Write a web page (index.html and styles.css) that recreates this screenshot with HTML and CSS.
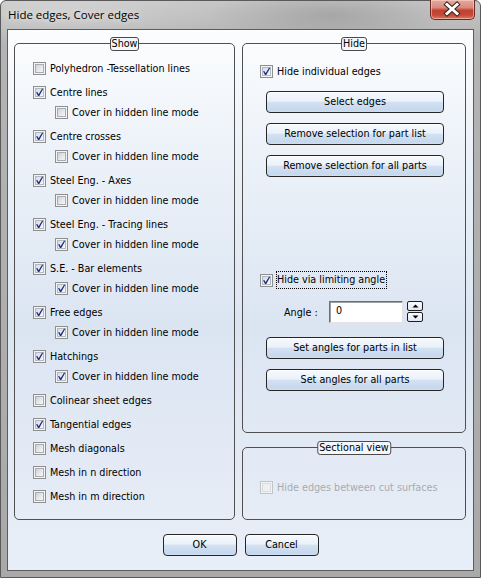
FILE: index.html
```html
<!DOCTYPE html>
<html>
<head>
<meta charset="utf-8">
<link rel="stylesheet" href="styles.css">
</head>
<body>
<div class="window">
  <div class="titlebar">
    <span class="title">Hide edges, Cover edges</span>
    <div class="close">
      <svg width="45" height="20" viewBox="0 0 45 20">
        <path d="M17 5.5 L27 14.5 M27 5.5 L17 14.5" stroke="#3a2420" stroke-width="5" stroke-linecap="square"/>
        <path d="M17 5.5 L27 14.5 M27 5.5 L17 14.5" stroke="#ffffff" stroke-width="3" stroke-linecap="square"/>
      </svg>
    </div>
  </div>
  <div class="client">
    <div class="cols">
      <section class="group show-group">
        <span class="group-label">Show</span>
        <div class="row"><span class="cb"></span><span>Polyhedron -Tessellation lines</span></div>
        <div class="row main"><span class="cb on"><svg viewBox="0 0 13 13"><path d="M3 6.2 L4.6 6.2 L5.6 8.2 L9 2.8 L10.3 2.8 L6.3 10 L5 10 Z" fill="#1d2f86"/></svg></span><span>Centre lines</span></div>
        <div class="row sub"><span class="cb"></span><span>Cover in hidden line mode</span></div>
        <div class="row main"><span class="cb on"><svg viewBox="0 0 13 13"><path d="M3 6.2 L4.6 6.2 L5.6 8.2 L9 2.8 L10.3 2.8 L6.3 10 L5 10 Z" fill="#1d2f86"/></svg></span><span>Centre crosses</span></div>
        <div class="row sub"><span class="cb"></span><span>Cover in hidden line mode</span></div>
        <div class="row main"><span class="cb on"><svg viewBox="0 0 13 13"><path d="M3 6.2 L4.6 6.2 L5.6 8.2 L9 2.8 L10.3 2.8 L6.3 10 L5 10 Z" fill="#1d2f86"/></svg></span><span>Steel Eng. - Axes</span></div>
        <div class="row sub"><span class="cb"></span><span>Cover in hidden line mode</span></div>
        <div class="row main"><span class="cb on"><svg viewBox="0 0 13 13"><path d="M3 6.2 L4.6 6.2 L5.6 8.2 L9 2.8 L10.3 2.8 L6.3 10 L5 10 Z" fill="#1d2f86"/></svg></span><span>Steel Eng. - Tracing lines</span></div>
        <div class="row sub"><span class="cb on"><svg viewBox="0 0 13 13"><path d="M3 6.2 L4.6 6.2 L5.6 8.2 L9 2.8 L10.3 2.8 L6.3 10 L5 10 Z" fill="#1d2f86"/></svg></span><span>Cover in hidden line mode</span></div>
        <div class="row main"><span class="cb on"><svg viewBox="0 0 13 13"><path d="M3 6.2 L4.6 6.2 L5.6 8.2 L9 2.8 L10.3 2.8 L6.3 10 L5 10 Z" fill="#1d2f86"/></svg></span><span>S.E. - Bar elements</span></div>
        <div class="row sub"><span class="cb on"><svg viewBox="0 0 13 13"><path d="M3 6.2 L4.6 6.2 L5.6 8.2 L9 2.8 L10.3 2.8 L6.3 10 L5 10 Z" fill="#1d2f86"/></svg></span><span>Cover in hidden line mode</span></div>
        <div class="row main"><span class="cb on"><svg viewBox="0 0 13 13"><path d="M3 6.2 L4.6 6.2 L5.6 8.2 L9 2.8 L10.3 2.8 L6.3 10 L5 10 Z" fill="#1d2f86"/></svg></span><span>Free edges</span></div>
        <div class="row sub"><span class="cb on"><svg viewBox="0 0 13 13"><path d="M3 6.2 L4.6 6.2 L5.6 8.2 L9 2.8 L10.3 2.8 L6.3 10 L5 10 Z" fill="#1d2f86"/></svg></span><span>Cover in hidden line mode</span></div>
        <div class="row main"><span class="cb on"><svg viewBox="0 0 13 13"><path d="M3 6.2 L4.6 6.2 L5.6 8.2 L9 2.8 L10.3 2.8 L6.3 10 L5 10 Z" fill="#1d2f86"/></svg></span><span>Hatchings</span></div>
        <div class="row sub"><span class="cb on"><svg viewBox="0 0 13 13"><path d="M3 6.2 L4.6 6.2 L5.6 8.2 L9 2.8 L10.3 2.8 L6.3 10 L5 10 Z" fill="#1d2f86"/></svg></span><span>Cover in hidden line mode</span></div>
        <div class="row main"><span class="cb"></span><span>Colinear sheet edges</span></div>
        <div class="row main"><span class="cb on"><svg viewBox="0 0 13 13"><path d="M3 6.2 L4.6 6.2 L5.6 8.2 L9 2.8 L10.3 2.8 L6.3 10 L5 10 Z" fill="#1d2f86"/></svg></span><span>Tangential edges</span></div>
        <div class="row main"><span class="cb"></span><span>Mesh diagonals</span></div>
        <div class="row main"><span class="cb"></span><span>Mesh in n direction</span></div>
        <div class="row main"><span class="cb"></span><span>Mesh in m direction</span></div>
      </section>
      <div class="right">
        <section class="group hide-group">
          <span class="group-label">Hide</span>
          <div class="row"><span class="cb on"><svg viewBox="0 0 13 13"><path d="M3 6.2 L4.6 6.2 L5.6 8.2 L9 2.8 L10.3 2.8 L6.3 10 L5 10 Z" fill="#1d2f86"/></svg></span><span>Hide individual edges</span></div>
          <button class="btn wide first">Select edges</button>
          <button class="btn wide">Remove selection for part list</button>
          <button class="btn wide">Remove selection for all parts</button>
          <div class="row angle-check"><span class="cb on"><svg viewBox="0 0 13 13"><path d="M3 6.2 L4.6 6.2 L5.6 8.2 L9 2.8 L10.3 2.8 L6.3 10 L5 10 Z" fill="#1d2f86"/></svg></span><span class="focus">Hide via limiting angle</span></div>
          <div class="angle-row">
            <span class="angle-label">Angle :</span>
            <span class="input">0</span>
            <span class="spinner">
              <span class="spin"><svg width="7" height="4" viewBox="0 0 7 4"><path d="M0.5 3.5 L3.5 0.5 L6.5 3.5 Z" fill="#000"/></svg></span>
              <span class="spin"><svg width="7" height="4" viewBox="0 0 7 4"><path d="M0.5 0.5 L3.5 3.5 L6.5 0.5 Z" fill="#000"/></svg></span>
            </span>
          </div>
          <button class="btn wide set-first">Set angles for parts in list</button>
          <button class="btn wide">Set angles for all parts</button>
        </section>
        <section class="group sect-group">
          <span class="group-label">Sectional view</span>
          <div class="row disabled"><span class="cb off"></span><span>Hide edges between cut surfaces</span></div>
        </section>
      </div>
    </div>
    <div class="footer">
      <button class="btn small">OK</button>
      <button class="btn small">Cancel</button>
    </div>
  </div>
</div>
</body>
</html>
```

FILE: styles.css
```css
html, body {
  margin: 0;
  padding: 0;
  background: #ffffff;
}

body {
  font-family: "DejaVu Sans Condensed", "DejaVu Sans", Tahoma, sans-serif;
  font-stretch: condensed;
  font-size: 10.7px;
  color: #000;
}

.window {
  width: 481px;
  height: 578px;
  box-sizing: border-box;
  display: flex;
  flex-direction: column;
  padding: 0 6px 6px;
  border: 1px solid #5a5a5a;
  border-radius: 6px 6px 0 0;
  background:
    radial-gradient(ellipse 120px 30px at 330px 14px, rgba(120,120,120,0.35), rgba(120,120,120,0) 100%),
    radial-gradient(ellipse 160px 40px at 60px 10px, rgba(255,255,255,0.25), rgba(255,255,255,0) 100%),
    linear-gradient(to bottom, #c6c6c6 0%, #b4b4b4 40px, #a9a9a9 100%);
}

.titlebar {
  height: 28px;
  flex: none;
  position: relative;
  display: flex;
  align-items: center;
}

.title {
  font-family: "Open Sans", "Noto Sans", sans-serif;
  font-stretch: normal;
  font-size: 11.5px;
  color: #000;
  padding-left: 1px;
  margin-top: -1px;
  text-shadow: 0 0 6px rgba(255,255,255,0.9);
}

.close {
  position: absolute;
  top: -1px;
  right: -1px;
  width: 45px;
  height: 20px;
  box-sizing: border-box;
  border: 1px solid #6a2a22;
  border-top: none;
  border-radius: 0 0 5px 5px;
  background: linear-gradient(to bottom, #e6aa9f 0%, #d88a7c 40%, #c2402f 55%, #c64a36 80%, #dc7c62 100%);
  box-shadow: inset 0 0 0 1px rgba(255,220,210,0.5);
  overflow: hidden;
}

.close svg {
  display: block;
  position: absolute;
  left: -1px;
  top: -1px;
}

.client {
  flex: 1;
  box-sizing: border-box;
  border: 1px solid #5c5c5c;
  background: linear-gradient(to bottom, #fcfdfe 0%, #eef3f9 20%, #dbe5f2 55%, #e3eaf5 80%, #e9eff8 100%);
  display: flex;
  flex-direction: column;
  padding: 13px 7px 0 6px;
}

.cols {
  display: flex;
  gap: 7px;
  height: 477px;
}

.group {
  position: relative;
  box-sizing: border-box;
  border: 1px solid #505050;
  border-radius: 5px;
}

.group-label {
  position: absolute;
  top: -7px;
  left: 50%;
  transform: translateX(-50%);
  height: 14px;
  box-sizing: border-box;
  border: 1px solid #4a4a4a;
  border-radius: 3px;
  background: #f3f6fb;
  padding: 0 1px;
  line-height: 12px;
  white-space: nowrap;
}

.show-group {
  width: 221px;
  flex: none;
  padding: 14px 0 0 18px;
}

.right {
  flex: 1;
  display: flex;
  flex-direction: column;
  gap: 14px;
}

.hide-group {
  height: 390px;
  flex: none;
  padding: 17px 0 0 17px;
  display: flex;
  flex-direction: column;
  align-items: flex-start;
}

.sect-group {
  flex: 1;
  padding: 29px 0 0 17px;
}

.row {
  height: 20px;
  display: flex;
  align-items: center;
  gap: 4px;
  white-space: nowrap;
}

.row.main {
  margin-top: 4px;
}

.row.sub {
  padding-left: 22px;
}

.cb {
  width: 13px;
  height: 13px;
  flex: none;
  box-sizing: border-box;
  border: 1px solid #8e8f8f;
  background: #f4f4f4;
  position: relative;
}

.cb::before {
  content: "";
  position: absolute;
  left: 1px;
  top: 1px;
  width: 9px;
  height: 9px;
  box-sizing: border-box;
  border: 1px solid #a9acb0;
  background: linear-gradient(135deg, #cdd0d5 0%, #e4e6e9 50%, #f7f7f7 100%);
}

.cb.on::before {
  border-color: #b3b8c2;
  background: linear-gradient(135deg, #d5d9e2 0%, #eceef3 60%, #f8f8fa 100%);
}

.cb svg {
  position: absolute;
  left: -1px;
  top: -1px;
  width: 13px;
  height: 13px;
  display: block;
}

.cb.off {
  border-color: #c2c4c6;
  background: #f2f3f4;
}

.cb.off::before {
  border-color: #dadcde;
  background: #eeeff1;
}

.disabled {
  color: #a8abb0;
}

.btn {
  font-family: inherit;
  font-stretch: condensed;
  font-size: 10.7px;
  color: #000;
  box-sizing: border-box;
  border: 1px solid #262626;
  border-radius: 4px;
  background: linear-gradient(to bottom, #f7fafd 0%, #eaf1f9 45%, #d3e1f1 52%, #c6d8ee 90%, #cfdef1 100%);
  padding: 0;
  margin: 0;
  line-height: 18px;
  box-shadow: inset 0 1px 0 #ffffff;
}

.btn.wide {
  width: 178px;
  height: 22px;
  margin-left: 6px;
  margin-top: 10px;
}

.btn.wide.first {
  margin-top: 10px;
}

.angle-check {
  margin-top: 93px;
}

.focus {
  outline: 1px dotted #000;
  outline-offset: 0;
  padding: 1px 1px 2px 0;
}

.angle-row {
  margin-top: 11px;
  height: 22px;
  display: flex;
  align-items: center;
  padding-left: 24px;
}

.angle-label {
  width: 45px;
}

.input {
  width: 74px;
  height: 22px;
  box-sizing: border-box;
  border: 1px solid;
  border-color: #6f6f6f #e2e3e6 #e2e3e6 #6f6f6f;
  box-shadow: inset 1px 1px 0 #a0a0a0;
  background: #ffffff;
  padding: 2px 0 0 6px;
  line-height: 14px;
}

.spinner {
  margin-left: 4px;
  display: flex;
  flex-direction: column;
  gap: 1px;
  margin-top: -1px;
}

.spin {
  width: 16px;
  height: 10px;
  box-sizing: border-box;
  border: 1px solid #1e1e1e;
  border-radius: 2px;
  background: linear-gradient(to bottom, #fafcfe, #dfe8f4);
  display: flex;
  align-items: center;
  justify-content: center;
}

.spin svg {
  display: block;
}

.btn.wide.set-first {
  margin-top: 14px;
}

.footer {
  display: flex;
  justify-content: center;
  gap: 8px;
  margin-top: 14px;
  padding-left: 1px;
}

.btn.small {
  width: 74px;
  height: 22px;
}
```
